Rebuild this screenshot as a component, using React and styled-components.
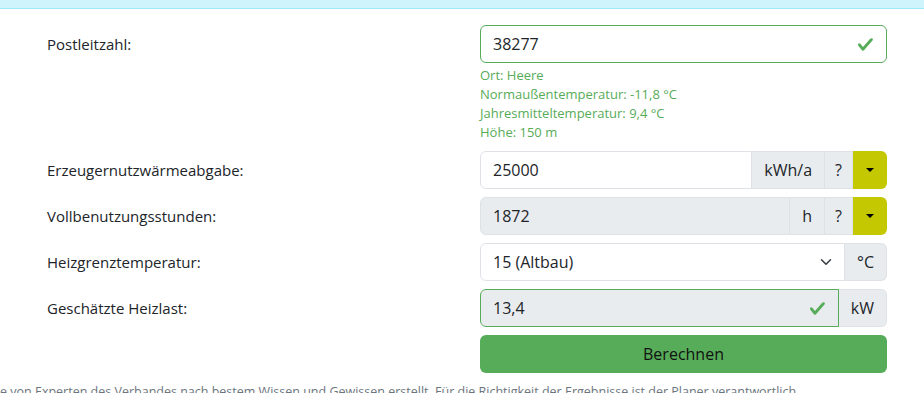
import React from "react";
import styled, { createGlobalStyle } from "styled-components";

const GlobalStyle = createGlobalStyle`
  html, body {
    margin: 0;
    padding: 0;
    background: #fff;
  }
  body {
    font-family: "Open Sans", "Liberation Sans", sans-serif;
    color: #212529;
    overflow: hidden;
  }
`;

const GREEN = "#57ac59";
const LIME = "#c4c800";

const Banner = styled.div`
  height: 8px;
  background: #cff4fc;
  border-bottom: 1px solid #9eeaf9;
`;

const Form = styled.div`
  padding: 16px 0 0 47px;
  width: 840px;
`;

const Row = styled.div`
  display: grid;
  grid-template-columns: 433px 407px;
  align-items: start;
  margin-bottom: ${({ $gap }) => $gap || 8}px;
`;

const Label = styled.div`
  font-size: 15px;
  line-height: 38px;
  color: #212529;
`;

const Group = styled.div`
  display: flex;
  height: 38px;
`;

const Input = styled.div`
  flex: 1;
  display: flex;
  align-items: center;
  padding: 0 12px;
  font-size: 16px;
  background: ${({ $disabled }) => ($disabled ? "#e9ecef" : "#fff")};
  border: 1px solid ${({ $valid }) => ($valid ? GREEN : "#dee2e6")};
  border-radius: ${({ $alone }) => ($alone ? "6px" : "6px 0 0 6px")};
  box-sizing: border-box;
`;

const Value = styled.span`
  flex: 1;
`;

const Addon = styled.div`
  display: flex;
  align-items: center;
  justify-content: center;
  padding: 0 ${({ $pad }) => $pad || 12}px;
  font-size: 16px;
  background: #e9ecef;
  border: 1px solid #dee2e6;
  border-left: none;
  border-radius: ${({ $last }) => ($last ? "0 6px 6px 0" : "0")};
`;

const DropButton = styled.div`
  width: 34px;
  display: flex;
  align-items: center;
  justify-content: center;
  background: ${LIME};
  border-radius: 0 6px 6px 0;

  &::after {
    content: "";
    border-top: 4px solid #000;
    border-left: 4px solid transparent;
    border-right: 4px solid transparent;
  }
`;

const Feedback = styled.div`
  margin-top: 3px;
  font-size: 13px;
  line-height: 19px;
  color: ${GREEN};
`;

const SubmitButton = styled.div`
  height: 38px;
  display: flex;
  align-items: center;
  justify-content: center;
  background: ${GREEN};
  border-radius: 6px;
  font-size: 16px;
  color: #111;
`;

const Footer = styled.div`
  margin-top: 9px;
  font-size: 12.5px;
  line-height: 19px;
  color: #6c757d;
  white-space: nowrap;
`;

const Check = () => (
  <svg width="17" height="17" viewBox="0 0 8 8">
    <path
      fill={GREEN}
      d="M2.3 6.73.6 4.53c-.4-1.04.46-1.4 1.1-.8l1.1 1.4 3.4-3.8c.6-.63 1.6-.27 1.2.7l-4 4.6c-.43.5-.8.4-1.1.1z"
    />
  </svg>
);

const Chevron = () => (
  <svg width="12" height="12" viewBox="0 0 16 16">
    <path
      fill="none"
      stroke="#343a40"
      strokeLinecap="round"
      strokeLinejoin="round"
      strokeWidth="2"
      d="m2 5 6 6 6-6"
    />
  </svg>
);

export default function App() {
  return (
    <>
      <GlobalStyle />
      <Banner />
      <Form>
        <Row $gap={9}>
          <Label>Postleitzahl:</Label>
          <div>
            <Group>
              <Input $valid $alone>
                <Value>38277</Value>
                <Check />
              </Input>
            </Group>
            <Feedback>
              <div>Ort: Heere</div>
              <div>Normaußentemperatur: -11,8 °C</div>
              <div>Jahresmitteltemperatur: 9,4 °C</div>
              <div>Höhe: 150 m</div>
            </Feedback>
          </div>
        </Row>

        <Row>
          <Label>Erzeugernutzwärmeabgabe:</Label>
          <Group>
            <Input>
              <Value>25000</Value>
            </Input>
            <Addon>kWh/a</Addon>
            <Addon $pad={10}>?</Addon>
            <DropButton />
          </Group>
        </Row>

        <Row>
          <Label>Vollbenutzungsstunden:</Label>
          <Group>
            <Input $disabled>
              <Value>1872</Value>
            </Input>
            <Addon>h</Addon>
            <Addon $pad={10}>?</Addon>
            <DropButton />
          </Group>
        </Row>

        <Row>
          <Label>Heizgrenztemperatur:</Label>
          <Group>
            <Input>
              <Value>15 (Altbau)</Value>
              <Chevron />
            </Input>
            <Addon $last>°C</Addon>
          </Group>
        </Row>

        <Row>
          <Label>Geschätzte Heizlast:</Label>
          <Group>
            <Input $valid $disabled>
              <Value>13,4</Value>
              <Check />
            </Input>
            <Addon $last>kW</Addon>
          </Group>
        </Row>

        <Row>
          <div />
          <SubmitButton>Berechnen</SubmitButton>
        </Row>
      </Form>
      <Footer>
        e von Experten des Verbandes nach bestem Wissen und Gewissen erstellt. Für die Richtigkeit der Ergebnisse ist der Planer verantwortlich.
      </Footer>
    </>
  );
}
